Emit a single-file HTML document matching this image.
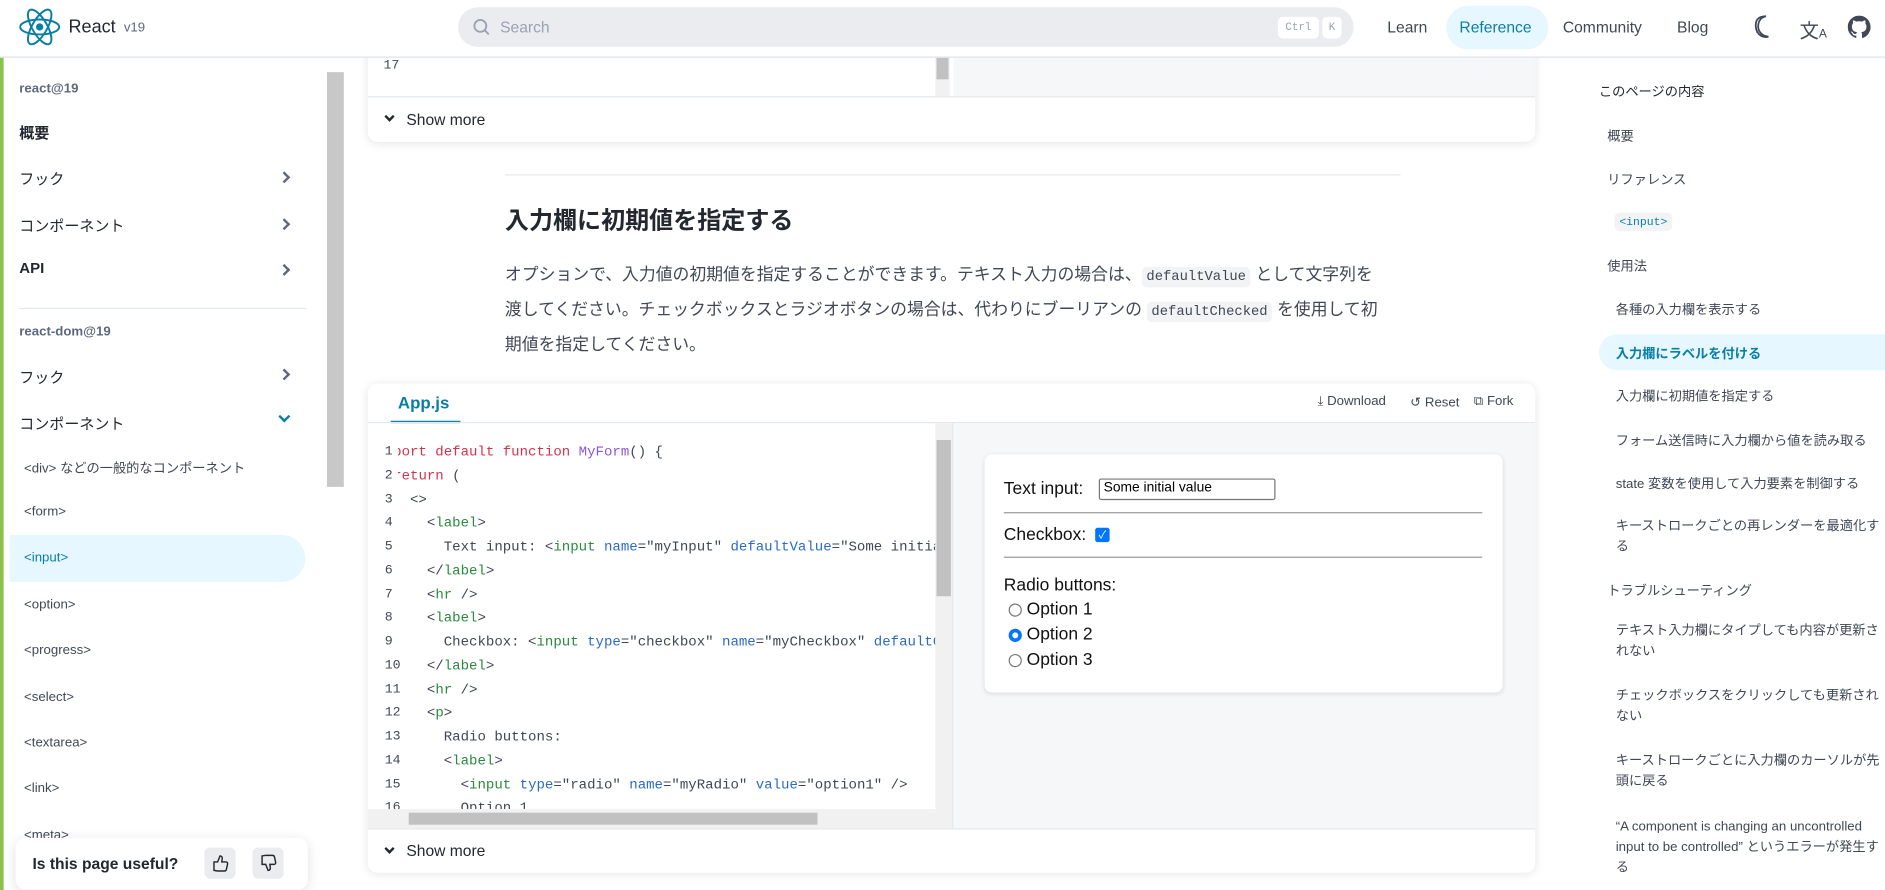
<!DOCTYPE html>
<html><head><meta charset="utf-8">
<style>
*{box-sizing:border-box;margin:0;padding:0}
html,body{width:1885px;height:890px;overflow:hidden;background:#fff}
body{font-family:"Liberation Sans","Noto Sans CJK JP",sans-serif;color:#23272f;position:relative}
#w{position:absolute;left:0;top:0;width:1568px;height:741px;transform:scale(1.20217);transform-origin:0 0}
.a{position:absolute;white-space:nowrap}
.hdr{position:absolute;left:0;top:0;width:1568px;height:48px;background:#fff;border-bottom:1px solid #dde1e6;z-index:5}
.side{position:absolute;left:0;top:48px;width:286px;height:693px;border-left:3px solid #8bc34a;background:#fff}
.sb{font-size:12.5px;color:#23272f}
.sm{font-size:11px;color:#404756}
.chev{position:absolute;left:230px;width:7px;height:7px;border-right:2px solid #5e687e;border-top:2px solid #5e687e;transform:rotate(45deg)}
.card{position:absolute;background:#fff;border-radius:8px;box-shadow:0 1px 8px rgba(0,0,0,.1);overflow:hidden}
.mono{font-family:"Liberation Mono",monospace}
.kw{color:#d6324e}.fn{color:#8b56d8}.tg{color:#2a8a3e}.at{color:#2b6bc5}.st{color:#404756}
.code div{height:19.75px;line-height:19.75px}
.toc{font-size:11px;color:#404756}
.tw{white-space:normal;width:225px;line-height:17px}
</style></head><body><div id="w">

<div class="hdr">
  <svg class="a" style="left:16px;top:7px" width="34" height="31" viewBox="-11.5 -10.2 23 20.5"><circle r="2.05" fill="#087ea4"/><g stroke="#087ea4" stroke-width="1.1" fill="none"><ellipse rx="11" ry="4.2"/><ellipse rx="11" ry="4.2" transform="rotate(60)"/><ellipse rx="11" ry="4.2" transform="rotate(120)"/></g></svg>
  <div class="a" style="left:57px;top:14px;font-size:15px;color:#23272f">React</div>
  <div class="a" style="left:103px;top:17px;font-size:11px;color:#5e687e">v19</div>
  <div class="a" style="left:381px;top:6px;width:745px;height:33px;border-radius:17px;background:#ebecf0"></div>
  <svg class="a" style="left:393px;top:15px" width="15" height="15" viewBox="0 0 16 16"><circle cx="7" cy="7" r="5.3" stroke="#99a1b3" stroke-width="1.6" fill="none"/><path d="M11 11l3.5 3.5" stroke="#99a1b3" stroke-width="1.6"/></svg>
  <div class="a" style="left:416px;top:15px;font-size:13px;color:#99a1b3">Search</div>
  <div class="a mono" style="left:1063px;top:14px;width:34px;height:18px;background:#fff;border-radius:4px;font-size:9px;color:#99a1b3;text-align:center;line-height:18px">Ctrl</div>
  <div class="a mono" style="left:1100px;top:14px;width:16px;height:18px;background:#fff;border-radius:4px;font-size:9px;color:#99a1b3;text-align:center;line-height:18px">K</div>
  <div class="a" style="left:1154px;top:15px;font-size:13px;color:#404756">Learn</div>
  <div class="a" style="left:1203px;top:5px;width:85px;height:36px;border-radius:18px;background:#e6f7ff"></div>
  <div class="a" style="left:1214px;top:15px;font-size:13px;color:#087ea4">Reference</div>
  <div class="a" style="left:1300px;top:15px;font-size:13px;color:#404756">Community</div>
  <div class="a" style="left:1395px;top:15px;font-size:13px;color:#404756">Blog</div>
  <svg class="a" style="left:1458px;top:12px" width="18" height="20" viewBox="0 0 18 20"><path d="M11 1.5C6.5 2.5 4.5 6 4.5 10s3 8 8.5 8.5c-3.5 1.2-10-.8-10.5-8.5S7.5 1.5 11 1.5z" stroke="#404756" stroke-width="1.5" fill="none"/></svg>
  <div class="a" style="left:1497px;top:12px;font-size:16px;color:#404756;font-family:'Noto Sans CJK JP',sans-serif">文<span style="font-size:10px;font-family:'Liberation Sans'">A</span></div>
  <svg class="a" style="left:1537px;top:13px" width="19" height="19" viewBox="0 0 16 16"><path fill="#404756" d="M8 0C3.58 0 0 3.58 0 8c0 3.54 2.29 6.53 5.47 7.59.4.07.55-.17.55-.38v-1.33c-2.23.48-2.7-1.07-2.7-1.07-.36-.92-.89-1.17-.89-1.17-.73-.5.06-.49.06-.49.8.06 1.23.83 1.23.83.71 1.22 1.87.87 2.33.66.07-.52.28-.87.51-1.07-1.78-.2-3.65-.89-3.65-3.95 0-.87.31-1.59.82-2.15-.08-.2-.36-1.02.08-2.12 0 0 .67-.21 2.2.82a7.7 7.7 0 014 0c1.530-1.04 2.2-.82 2.2-.82.44 1.1.16 1.92.08 2.12.51.56.82 1.27.82 2.15 0 3.07-1.87 3.75-3.65 3.95.29.25.54.73.54 1.48v2.2c0 .21.15.46.55.38A8 8 0 0016 8c0-4.42-3.58-8-8-8z"/></svg>
</div>

<div class="side">
  <div class="a" style="left:13px;top:20px;font-size:11px;color:#5e687e;font-weight:bold">react@19</div>
  <div class="a sb" style="left:13px;top:52px;font-weight:bold">概要</div>
  <div class="a sb" style="left:13px;top:90px">フック</div><div class="chev" style="top:96px"></div>
  <div class="a sb" style="left:13px;top:129px">コンポーネント</div><div class="chev" style="top:135px"></div>
  <div class="a sb" style="left:13px;top:168px;font-weight:bold">API</div><div class="chev" style="top:173px"></div>
  <div class="a" style="left:13px;top:208px;width:239px;height:1px;background:#e4e7eb"></div>
  <div class="a" style="left:13px;top:222px;font-size:11px;color:#5e687e;font-weight:bold">react-dom@19</div>
  <div class="a sb" style="left:13px;top:255px">フック</div><div class="chev" style="top:260px"></div>
  <div class="a sb" style="left:13px;top:294px">コンポーネント</div>
  <div class="a" style="left:230px;top:295px;width:7px;height:7px;border-right:2px solid #087ea4;border-bottom:2px solid #087ea4;transform:rotate(45deg)"></div>
  <div class="a sm" style="left:17px;top:333px">&lt;div&gt; などの一般的なコンポーネント</div>
  <div class="a sm" style="left:17px;top:372px">&lt;form&gt;</div>
  <div class="a" style="left:5px;top:397px;width:246px;height:39px;border-radius:0 20px 20px 0;background:#e6f7ff"></div>
  <div class="a sm" style="left:17px;top:410px;color:#087ea4">&lt;input&gt;</div>
  <div class="a sm" style="left:17px;top:449px">&lt;option&gt;</div>
  <div class="a sm" style="left:17px;top:487px">&lt;progress&gt;</div>
  <div class="a sm" style="left:17px;top:526px">&lt;select&gt;</div>
  <div class="a sm" style="left:17px;top:564px">&lt;textarea&gt;</div>
  <div class="a sm" style="left:17px;top:602px">&lt;link&gt;</div>
  <div class="a sm" style="left:17px;top:641px">&lt;meta&gt;</div>
  <div class="a" style="left:269px;top:12px;width:14px;height:345px;background:#c8c8c8"></div>
</div>

<div class="card" style="left:306px;top:20px;width:971px;height:98px;border-radius:0 0 8px 8px">
  <div class="a mono" style="left:13px;top:29px;font-size:11px;color:#404756">17</div>
  <div class="a" style="left:472px;top:0;width:12px;height:60px;background:#f1f1f1"></div>
  <div class="a" style="left:473px;top:28px;width:10px;height:18px;background:#c1c1c1"></div>
  <div class="a" style="left:487px;top:0;width:484px;height:60px;background:#f6f7f9"></div>
  <div class="a" style="left:0;top:60px;width:971px;height:1px;background:#e4e7eb"></div>
  <div class="a" style="left:15px;top:74px;width:6px;height:6px;border-right:2px solid #23272f;border-bottom:2px solid #23272f;transform:rotate(45deg)"></div>
  <div class="a" style="left:32px;top:72px;font-size:13px;color:#23272f">Show more</div>
</div>

<div class="a" style="left:420px;top:145px;width:745px;height:1px;background:#e4e7eb"></div>
<div class="a" style="left:420px;top:167px;font-size:20px;font-weight:bold;color:#23272f">入力欄に初期値を指定する</div>
<div class="a" style="left:420px;top:215px;font-size:14px;color:#404756;line-height:26px;white-space:normal;width:728px">オプションで、入力値の初期値を指定することができます。テキスト入力の場合は、<span class="mono" style="background:#f2f3f5;font-size:11.5px;padding:2px 4px;border-radius:4px">defaultValue</span> として文字列を渡してください。チェックボックスとラジオボタンの場合は、代わりにブーリアンの <span class="mono" style="background:#f2f3f5;font-size:11.5px;padding:2px 4px;border-radius:4px">defaultChecked</span> を使用して初期値を指定してください。</div>

<div class="card" style="left:306px;top:319px;width:971px;height:407px">
  <div class="a" style="left:25px;top:8px;font-size:14px;color:#087ea4;font-weight:bold">App.js</div>
  <div class="a" style="left:19px;top:31px;width:58px;height:2px;background:#087ea4"></div>
  <div class="a" style="left:0;top:32px;width:971px;height:1px;background:#e4e7eb"></div>
  <div class="a" style="left:790px;top:9px;font-size:11px;color:#404756">⤓ Download</div>
  <div class="a" style="left:867px;top:9px;font-size:11px;color:#404756">↺ Reset</div>
  <div class="a" style="left:920px;top:9px;font-size:11px;color:#404756">⧉ Fork</div>
  <div class="a mono code" style="left:14px;top:48px;font-size:11px;color:#404756;width:18px">
    <div>1</div><div>2</div><div>3</div><div>4</div><div>5</div><div>6</div><div>7</div><div>8</div><div>9</div><div>10</div><div>11</div><div>12</div><div>13</div><div>14</div><div>15</div><div>16</div>
  </div>
  <div class="a" style="left:25px;top:48px;width:447px;height:306px;overflow:hidden">
    <div class="a mono code st" style="left:-18px;top:0;font-size:11.7px;white-space:pre"><div><span class="kw">export default function</span> <span class="fn">MyForm</span>() {</div><div>  <span class="kw">return</span> (</div><div>    &lt;&gt;</div><div>      &lt;<span class="tg">label</span>&gt;</div><div>        Text input: &lt;<span class="tg">input</span> <span class="at">name</span>="myInput" <span class="at">defaultValue</span>="Some initial value" /&gt;</div><div>      &lt;/<span class="tg">label</span>&gt;</div><div>      &lt;<span class="tg">hr</span> /&gt;</div><div>      &lt;<span class="tg">label</span>&gt;</div><div>        Checkbox: &lt;<span class="tg">input</span> <span class="at">type</span>="checkbox" <span class="at">name</span>="myCheckbox" <span class="at">defaultChecked</span>={true} /&gt;</div><div>      &lt;/<span class="tg">label</span>&gt;</div><div>      &lt;<span class="tg">hr</span> /&gt;</div><div>      &lt;<span class="tg">p</span>&gt;</div><div>        Radio buttons:</div><div>        &lt;<span class="tg">label</span>&gt;</div><div>          &lt;<span class="tg">input</span> <span class="at">type</span>="radio" <span class="at">name</span>="myRadio" <span class="at">value</span>="option1" /&gt;</div><div>          Option 1</div></div>
  </div>
  <div class="a" style="left:0;top:354px;width:486px;height:16px;background:#f1f1f1"></div>
  <div class="a" style="left:34px;top:357px;width:340px;height:10px;background:#c1c1c1"></div>
  <div class="a" style="left:472px;top:33px;width:14px;height:321px;background:#f1f1f1"></div>
  <div class="a" style="left:473px;top:47px;width:12px;height:130px;background:#c1c1c1"></div>
  <div class="a" style="left:486px;top:33px;width:1px;height:337px;background:#e4e7eb"></div>
  <div class="a" style="left:487px;top:33px;width:484px;height:337px;background:#f6f7f9"></div>
  <div class="a" style="left:513px;top:59px;width:431px;height:198px;background:#fff;border-radius:6px;box-shadow:0 1px 4px rgba(0,0,0,.12)">
    <div class="a" style="left:16px;top:21px;font-size:14.5px;color:#111">Text input:</div>
    <div class="a" style="left:95px;top:20px;width:147px;height:18px;border:1px solid #767676;border-radius:2px;font-size:11.5px;padding:1px 3px;color:#000">Some initial value</div>
    <div class="a" style="left:16px;top:48px;width:398px;height:1px;background:#999"></div>
    <div class="a" style="left:16px;top:59px;font-size:14.5px;color:#111">Checkbox:</div>
    <div class="a" style="left:92px;top:61px;width:12px;height:12px;background:#0075ff;border-radius:2px;color:#fff;font-size:9px;line-height:12px;text-align:center">✓</div>
    <div class="a" style="left:16px;top:85px;width:398px;height:1px;background:#999"></div>
    <div class="a" style="left:16px;top:101px;font-size:14.5px;color:#111">Radio buttons:</div>
    <div class="a" style="left:20px;top:124px;width:11px;height:11px;border:1px solid #767676;border-radius:50%"></div>
    <div class="a" style="left:35px;top:121px;font-size:14.5px;color:#111">Option 1</div>
    <div class="a" style="left:20px;top:145px;width:11px;height:11px;border:3px solid #0075ff;border-radius:50%"></div>
    <div class="a" style="left:35px;top:142px;font-size:14.5px;color:#111">Option 2</div>
    <div class="a" style="left:20px;top:166px;width:11px;height:11px;border:1px solid #767676;border-radius:50%"></div>
    <div class="a" style="left:35px;top:163px;font-size:14.5px;color:#111">Option 3</div>
  </div>
  <div class="a" style="left:0;top:370px;width:971px;height:1px;background:#e4e7eb"></div>
  <div class="a" style="left:15px;top:384px;width:6px;height:6px;border-right:2px solid #23272f;border-bottom:2px solid #23272f;transform:rotate(45deg)"></div>
  <div class="a" style="left:32px;top:381px;font-size:13px;color:#23272f">Show more</div>
</div>

<div class="a toc" style="left:1330px;top:68px;color:#23272f">このページの内容</div>
<div class="a toc" style="left:1337px;top:105px">概要</div>
<div class="a toc" style="left:1337px;top:141px">リファレンス</div>
<div class="a mono" style="left:1343px;top:177px;font-size:9.5px;color:#087ea4;background:#f2f3f5;padding:2px 4px;border-radius:4px">&lt;input&gt;</div>
<div class="a toc" style="left:1337px;top:213px">使用法</div>
<div class="a toc" style="left:1344px;top:249px">各種の入力欄を表示する</div>
<div class="a" style="left:1330px;top:278px;width:240px;height:30px;border-radius:20px 0 0 20px;background:#e6f7ff"></div>
<div class="a toc" style="left:1344px;top:286px;color:#087ea4;font-weight:bold">入力欄にラベルを付ける</div>
<div class="a toc" style="left:1344px;top:321px">入力欄に初期値を指定する</div>
<div class="a toc" style="left:1344px;top:358px">フォーム送信時に入力欄から値を読み取る</div>
<div class="a toc" style="left:1344px;top:394px">state 変数を使用して入力要素を制御する</div>
<div class="a toc tw" style="left:1344px;top:430px">キーストロークごとの再レンダーを最適化する</div>
<div class="a toc" style="left:1337px;top:483px">トラブルシューティング</div>
<div class="a toc tw" style="left:1344px;top:517px">テキスト入力欄にタイプしても内容が更新されない</div>
<div class="a toc tw" style="left:1344px;top:571px">チェックボックスをクリックしても更新されない</div>
<div class="a toc tw" style="left:1344px;top:625px">キーストロークごとに入力欄のカーソルが先頭に戻る</div>
<div class="a toc tw" style="left:1344px;top:680px">“A component is changing an uncontrolled input to be controlled” というエラーが発生する</div>

<div class="a" style="left:13px;top:697px;width:243px;height:43px;background:#fff;border-radius:8px;box-shadow:0 2px 10px rgba(0,0,0,.12)">
  <div class="a" style="left:14px;top:14px;font-size:13px;font-weight:bold;color:#23272f">Is this page useful?</div>
  <div class="a" style="left:157px;top:8px;width:26px;height:26px;border-radius:5px;background:#ebecf0">
    <svg width="26" height="26" viewBox="0 0 26 26"><path d="M8 12h3l2-5c1.5 0 2 1 1.8 2.5L14.5 12H18c1 0 1.5.8 1.3 1.7l-1 4.5c-.2.8-.8 1.3-1.6 1.3H11L8 19z" fill="none" stroke="#23272f" stroke-width="1.2"/></svg>
  </div>
  <div class="a" style="left:197px;top:8px;width:26px;height:26px;border-radius:5px;background:#ebecf0">
    <svg width="26" height="26" viewBox="0 0 26 26"><path d="M8 14h3l2 5c1.5 0 2-1 1.8-2.5L14.5 14H18c1 0 1.5-.8 1.3-1.7l-1-4.5c-.2-.8-.8-1.3-1.6-1.3H11L8 7z" fill="none" stroke="#23272f" stroke-width="1.2"/></svg>
  </div>
</div>
</div></body></html>
